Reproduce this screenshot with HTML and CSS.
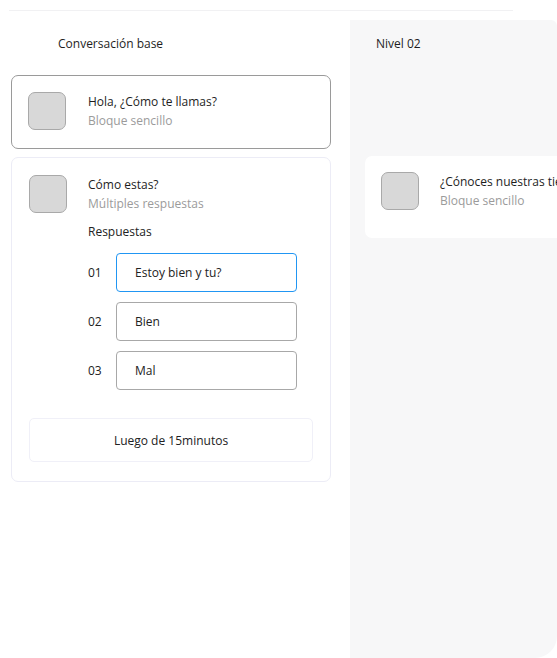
FILE: index.html
```
<!DOCTYPE html>
<html lang="es">
<head>
    <meta charset="utf-8">
    <meta name="viewport" content="width=device-width, initial-scale=1.0">
    <title>Conversaciones</title>
    <link rel="stylesheet" href="styles.css">
</head>
<body>
    <div class="top-line"></div>

    <div class="board">
        <div class="column base">
            <h2 class="column-title">Conversación base</h2>

            <div class="block outlined">
                <div class="block-head">
                    <div class="thumb"></div>
                    <div class="block-text">
                        <div class="block-name">Hola, ¿Cómo te llamas?</div>
                        <div class="block-kind">Bloque sencillo</div>
                    </div>
                </div>
            </div>

            <div class="block soft">
                <div class="block-head">
                    <div class="thumb"></div>
                    <div class="block-text">
                        <div class="block-name">Cómo estas?</div>
                        <div class="block-kind">Múltiples respuestas</div>
                    </div>
                </div>

                <div class="answers">
                    <div class="answers-title">Respuestas</div>
                    <div class="answer">
                        <span class="answer-num">01</span>
                        <div class="answer-box active">Estoy bien y tu?</div>
                    </div>
                    <div class="answer">
                        <span class="answer-num">02</span>
                        <div class="answer-box">Bien</div>
                    </div>
                    <div class="answer">
                        <span class="answer-num">03</span>
                        <div class="answer-box">Mal</div>
                    </div>
                </div>

                <div class="delay">Luego de 15minutos</div>
            </div>
        </div>

        <div class="column level">
            <h2 class="column-title">Nivel 02</h2>

            <div class="block plain">
                <div class="block-head">
                    <div class="thumb"></div>
                    <div class="block-text">
                        <div class="block-name">¿Cónoces nuestras tiendas?</div>
                        <div class="block-kind">Bloque sencillo</div>
                    </div>
                </div>
            </div>
        </div>
    </div>
</body>
</html>
```

FILE: styles.css
```
body {
    margin: 0;
    background: #fff;
    font-family: 'Open Sans', 'Noto Sans', sans-serif;
    color: #222;
    font-size: 12px;
    overflow: hidden;
}

.top-line {
    margin: 10px 0 0 9px;
    width: 504px;
    height: 1px;
    background: #f1f1f3;
}

.board {
    display: flex;
    margin-top: 9px;
    height: 638px;
}

.column-title {
    margin: 0;
    font-size: 12px;
    font-weight: 500;
    line-height: 16px;
    color: #1e1e1e;
}

.column.base {
    width: 339px;
    padding: 16px 0 0 11px;
}

.column.base .column-title {
    padding-left: 47px;
    margin-bottom: 23px;
}

.column.level {
    flex: 1;
    background: #f7f7f8;
    border-radius: 0 6px 22px 0;
    padding: 16px 0 0 15px;
    overflow: hidden;
}

.column.level .column-title {
    padding-left: 11px;
    margin-bottom: 104px;
}

.block {
    width: 320px;
    box-sizing: border-box;
    background: #fff;
    border-radius: 7px;
}

.block.outlined {
    border: 1px solid #9a9a9a;
    height: 74px;
    padding: 16px 16px 0;
}

.block.soft {
    margin-top: 8px;
    border: 1px solid #ececf6;
    padding: 17px 17px 19px;
}

.block.plain {
    width: 240px;
    height: 82px;
    padding: 16px 16px 0;
}

.block-head {
    display: flex;
    align-items: flex-start;
}

.thumb {
    width: 38px;
    height: 38px;
    box-sizing: border-box;
    flex-shrink: 0;
    background: #d8d8d8;
    border: 1px solid #a9a9a9;
    border-radius: 7px;
}

.block-text {
    margin-left: 22px;
    white-space: nowrap;
}

.soft .block-text,
.level .block-text {
    margin-left: 21px;
}

.block-name {
    line-height: 19px;
    color: #1e1e1e;
}

.block-kind {
    line-height: 19px;
    color: #9b9b9b;
}

.answers {
    padding-left: 59px;
    margin-top: 10px;
}

.answers-title {
    line-height: 18px;
    margin-bottom: 12px;
}

.answer {
    display: flex;
    align-items: center;
    margin-bottom: 10px;
}

.answer-num {
    width: 28px;
    color: #222;
}

.answer-box {
    width: 181px;
    height: 39px;
    box-sizing: border-box;
    border: 1px solid #a8a8a8;
    border-radius: 4px;
    padding-left: 18px;
    display: flex;
    align-items: center;
    color: #222;
}

.answer-box.active {
    border: 1.5px solid #2196f3;
}

.delay {
    margin-top: 28px;
    height: 44px;
    box-sizing: border-box;
    border: 1px solid #f0f0f8;
    border-radius: 5px;
    display: flex;
    align-items: center;
    justify-content: center;
    color: #222;
}
```
